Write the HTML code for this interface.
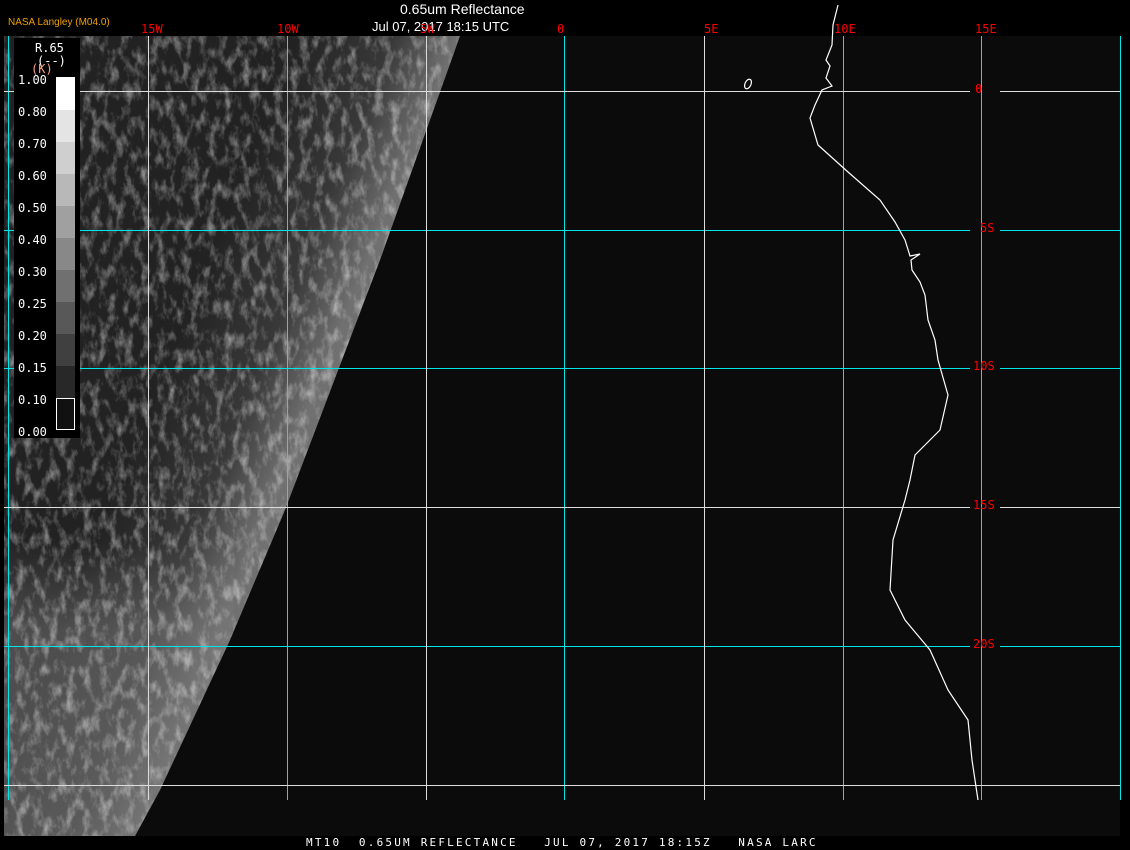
<!DOCTYPE html>
<html><head><meta charset="utf-8"><style>
html,body{margin:0;padding:0;background:#000;width:1130px;height:850px;overflow:hidden;font-family:"Liberation Sans",sans-serif}
.t{position:absolute;color:#fff;white-space:pre}
.m{font-family:"DejaVu Sans Mono","Liberation Mono",monospace}
</style></head><body>
<svg width="1130" height="850" style="position:absolute;left:0;top:0">
<defs>
<filter id="n" x="0" y="0" width="100%" height="100%">
<feTurbulence type="fractalNoise" baseFrequency="0.12 0.06" numOctaves="4" seed="7"/>
<feColorMatrix type="matrix" values="0 0 0 0 1  0 0 0 0 1  0 0 0 0 1  2.2 0 0 0 -1.0"/>
<feComponentTransfer><feFuncA type="linear" slope="0.5"/></feComponentTransfer>
</filter>
<linearGradient id="e" gradientUnits="userSpaceOnUse" x1="161" y1="374" x2="300" y2="430">
<stop offset="0" stop-color="#ddd" stop-opacity="0"/><stop offset="0.6" stop-color="#ddd" stop-opacity="0.12"/><stop offset="1" stop-color="#ddd" stop-opacity="0.42"/>
</linearGradient>
<linearGradient id="b" x1="0" y1="0" x2="0" y2="1">
<stop offset="0" stop-color="#777" stop-opacity="0"/><stop offset="0.3" stop-color="#777" stop-opacity="0.5"/><stop offset="1" stop-color="#777" stop-opacity="0.55"/>
</linearGradient>
<clipPath id="c"><polygon points="4,36 460,36 380,260 285,510 230,640 160,790 135,836 4,836"/></clipPath>
</defs>
<rect x="4" y="36" width="1116" height="800" fill="#0b0b0b"/>
<g clip-path="url(#c)">
<rect x="4" y="36" width="460" height="800" fill="#222"/>
<rect x="4" y="36" width="460" height="800" fill="url(#e)"/>
<rect x="4" y="540" width="230" height="296" fill="url(#b)"/>
<rect x="4" y="36" width="460" height="800" filter="url(#n)"/>
</g>
<g stroke="#00e5e5" stroke-width="1" shape-rendering="crispEdges">
<line x1="8.5" y1="36" x2="8.5" y2="800"/>
<line x1="287.5" y1="36" x2="287.5" y2="800"/>
<line x1="564.5" y1="36" x2="564.5" y2="800"/>
<line x1="843.5" y1="36" x2="843.5" y2="800"/>
<line x1="981.5" y1="36" x2="981.5" y2="800"/>
<line x1="1120.5" y1="36" x2="1120.5" y2="800"/>
<line x1="4" y1="230.5" x2="970" y2="230.5"/><line x1="1000" y1="230.5" x2="1120" y2="230.5"/>
<line x1="4" y1="368.5" x2="970" y2="368.5"/><line x1="1000" y1="368.5" x2="1120" y2="368.5"/>
<line x1="4" y1="646.5" x2="970" y2="646.5"/><line x1="1000" y1="646.5" x2="1120" y2="646.5"/>
</g>
<g stroke="#ddd" stroke-width="1" shape-rendering="crispEdges">
<line x1="148.5" y1="36" x2="148.5" y2="800"/>
<line x1="426.5" y1="36" x2="426.5" y2="800"/>
<line x1="704.5" y1="36" x2="704.5" y2="800"/>
<line x1="4" y1="91.5" x2="970" y2="91.5"/><line x1="1000" y1="91.5" x2="1120" y2="91.5"/>
<line x1="4" y1="507.5" x2="970" y2="507.5"/><line x1="1000" y1="507.5" x2="1120" y2="507.5"/>
<line x1="4" y1="785.5" x2="1120" y2="785.5"/>
</g>
<polyline fill="none" stroke="#fff" stroke-width="1.2" points="838,5 833,25 832,45 826,60 830,66 826,78 832,86 822,90 815,105 810,118 818,145 848,172 880,200 895,222 905,240 910,256 920,254 911,260 912,270 920,282 925,295 928,320 935,340 938,360 948,395 940,430 930,440 915,455 910,480 905,500 893,540 890,590 905,620 930,650 948,690 968,720 972,760 978,800"/>
<ellipse cx="748" cy="84" rx="3" ry="5" fill="none" stroke="#fff" stroke-width="1.2" transform="rotate(25 748 84)"/>
<rect x="14" y="38" width="66" height="400" fill="#000"/>
<g shape-rendering="crispEdges">
<rect x="56" y="77" width="19" height="33" fill="#fff"/>
<rect x="56" y="110" width="19" height="32" fill="#e4e4e4"/>
<rect x="56" y="142" width="19" height="32" fill="#cfcfcf"/>
<rect x="56" y="174" width="19" height="32" fill="#b8b8b8"/>
<rect x="56" y="206" width="19" height="32" fill="#a0a0a0"/>
<rect x="56" y="238" width="19" height="32" fill="#888"/>
<rect x="56" y="270" width="19" height="32" fill="#707070"/>
<rect x="56" y="302" width="19" height="32" fill="#585858"/>
<rect x="56" y="334" width="19" height="32" fill="#404040"/>
<rect x="56" y="366" width="19" height="32" fill="#282828"/>
<rect x="56.5" y="398.5" width="18" height="31" fill="#111" stroke="#fff"/>
</g>
</svg>
<div class="t" style="left:400px;top:1px;font-size:14px">0.65um Reflectance</div>
<div class="t" style="left:372px;top:19px;font-size:13px">Jul 07, 2017 18:15 UTC</div>
<div class="t" style="left:8px;top:17px;font-size:10px;color:#f0a000">NASA Langley (M04.0)</div>
<div class="t m" style="left:141px;top:22px;font-size:12px;color:#f00">15W</div>
<div class="t m" style="left:277px;top:22px;font-size:12px;color:#f00">10W</div>
<div class="t m" style="left:420px;top:22px;font-size:12px;color:#f00">5W</div>
<div class="t m" style="left:557px;top:22px;font-size:12px;color:#f00">0</div>
<div class="t m" style="left:704px;top:22px;font-size:12px;color:#f00">5E</div>
<div class="t m" style="left:834px;top:22px;font-size:12px;color:#f00">10E</div>
<div class="t m" style="left:975px;top:22px;font-size:12px;color:#f00">15E</div>
<div class="t m" style="left:975px;top:82px;font-size:12px;color:#f00">0</div>
<div class="t m" style="left:980px;top:221px;font-size:12px;color:#f00">5S</div>
<div class="t m" style="left:973px;top:359px;font-size:12px;color:#f00">10S</div>
<div class="t m" style="left:973px;top:498px;font-size:12px;color:#f00">15S</div>
<div class="t m" style="left:973px;top:637px;font-size:12px;color:#f00">20S</div>
<div class="t m" style="left:35px;top:41px;font-size:12px">R.65</div>
<div class="t m" style="left:37px;top:54px;font-size:12px">(--)</div>
<div class="t m" style="left:31px;top:62px;font-size:12px;color:#f9a080">(K)</div>
<div class="t m" style="left:18px;top:64px;font-size:12px;line-height:32px">1.00
0.80
0.70
0.60
0.50
0.40
0.30
0.25
0.20
0.15
0.10
0.00</div>
<div class="t m" style="left:306px;top:836px;font-size:11px;letter-spacing:2.2px">MT10  0.65UM REFLECTANCE   JUL 07, 2017 18:15Z   NASA LARC</div>
</body></html>
